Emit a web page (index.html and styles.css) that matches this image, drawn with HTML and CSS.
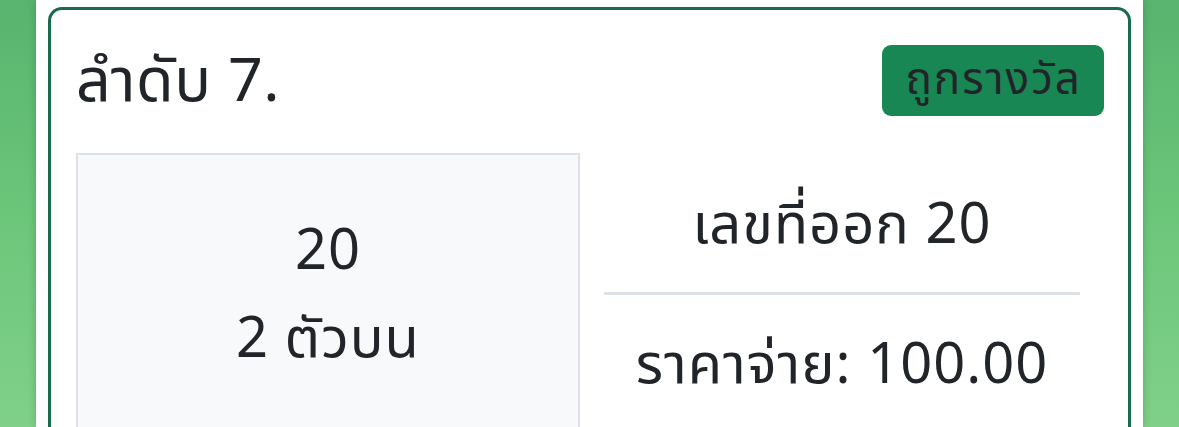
FILE: index.html
```html
<!DOCTYPE html>
<html lang="th">

<head>
  <meta charset="UTF-8">
  <title>ผลรางวัล</title>
  <link rel="stylesheet" href="styles.css">
</head>

<body>
  <div class="sheet">
    <div class="result-card">
      <div class="result-head">
        <span class="result-title">ลำดับ 7.</span>
        <span class="badge-win">ถูกรางวัล</span>
      </div>
      <div class="result-body">
        <div class="bet-box">
          <div>20</div>
          <div>2 ตัวบน</div>
        </div>
        <div class="draw-info">
          <div class="draw-line">เลขที่ออก 20</div>
          <hr>
          <div class="draw-line">ราคาจ่าย: 100.00</div>
        </div>
      </div>
    </div>
  </div>
</body>

</html>
```

FILE: styles.css
```css
body {
  margin: 0;
  height: 100vh;
  overflow: hidden;
  background: linear-gradient(180deg, #58b46e 0%, #6cc67a 50%, #80d08a 100%);
  font-family: "Noto Sans Thai", "Noto Sans", sans-serif;
  color: #212529;
}

.sheet {
  margin: 0 36px;
  height: 100%;
  background-color: #fff;
  padding: 7px 12px 0;
  box-sizing: border-box;
  box-shadow: 0 0 8px rgba(0, 60, 20, 0.25);
}

.result-card {
  border: 3px solid #186b4b;
  border-bottom: none;
  border-radius: 14px 14px 0 0;
  padding: 35px 24px 0 25px;
  height: 100%;
  box-sizing: border-box;
  overflow: hidden;
}

.result-head {
  display: flex;
  justify-content: space-between;
  align-items: center;
  margin-bottom: 37px;
}

.result-title {
  font-size: 61px;
  letter-spacing: 0.5px;
  line-height: 1;
  margin-top: 3px;
}

.badge-win {
  background-color: #198754;
  border-radius: 9px;
  font-size: 44px;
  letter-spacing: 2px;
  line-height: 71px;
  padding: 0 22px 0 23px;
}

.result-body {
  display: flex;
  gap: 24px;
}

.bet-box {
  flex: 1;
  height: 300px;
  background-color: #f8f9fa;
  border: 2px solid #dee2e6;
  display: flex;
  flex-direction: column;
  align-items: center;
  padding-top: 53px;
  font-size: 56px;
  letter-spacing: 1px;
  line-height: 88px;
}

.draw-info {
  flex: 1;
  font-size: 56px;
  letter-spacing: 1px;
  text-align: center;
}

.draw-line {
  line-height: 60px;
  padding-right: 24px;
}

.draw-info .draw-line:first-child {
  margin-top: 43px;
}

.draw-info hr {
  border: none;
  border-top: 3px solid #dee2e6;
  margin: 36px 24px 41px 0;
}
```
